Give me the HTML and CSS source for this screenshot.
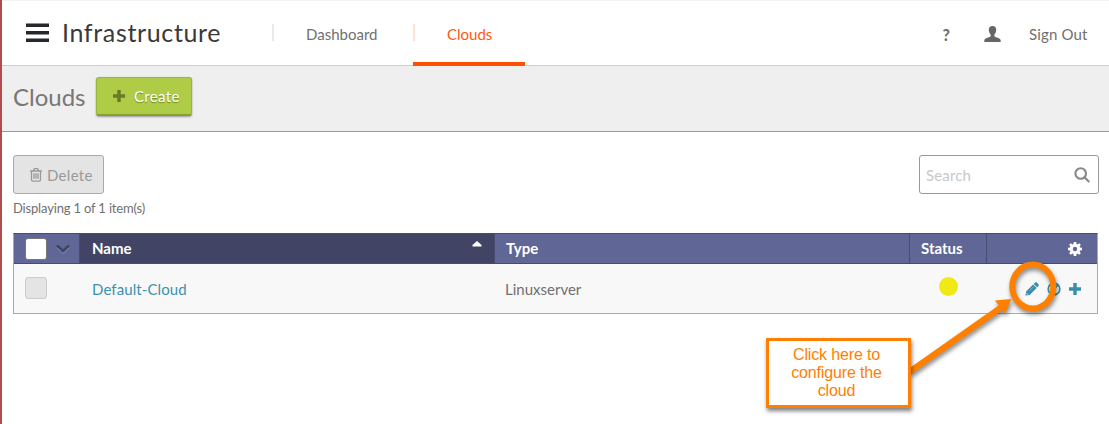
FILE: index.html
```html
<!DOCTYPE html>
<html lang="en">
<head>
<meta charset="utf-8">
<title>Infrastructure - Clouds</title>
<link rel="stylesheet" href="styles.css">
</head>
<body>
<div class="app">
  <header class="topbar">
    <svg class="menu" width="23" height="20" viewBox="0 0 23 20"><path d="M0 .5h23v3.500H0zM0 8h23v3.500H0zM0 15.500h23v3.500H0z" fill="#27282c"/></svg>
    <h1 class="brand">Infrastructure</h1>
    <nav class="nav">
      <a class="tab">Dashboard</a>
      <a class="tab active">Clouds</a>
    </nav>
    <div class="account">
      <span class="help">?</span>
      <svg class="user" width="17" height="16" viewBox="0 0 17 16"><path d="M8.500 0C5.800 0 4.600 1.700 4.800 4.300c.1 2 1 3.300 1.800 4.200v1.700C6 11.700.5 11.400.3 14.400V16h16.400v-1.600c-.2-3-5.700-2.700-6.300-4.200V8.500C11.200 7.600 12.100 6.300 12.200 4.300 12.400 1.700 11.200 0 8.500 0z" fill="#666"/></svg>
      <a class="signout">Sign Out</a>
    </div>
  </header>
  <div class="titlebar">
    <h2 class="title">Clouds</h2>
    <button class="create"><svg width="12" height="12" viewBox="0 0 12 12"><path d="M4.300 0h3.400v4.300H12v3.400H7.700V12H4.300V7.700H0V4.300h4.300z" fill="#67792a"/></svg><span>Create</span></button>
  </div>
  <main class="content">
    <div class="tools">
      <button class="delete"><svg width="12" height="14" viewBox="0 0 12 14" fill="none" stroke="#999" stroke-width="1.300"><path d="M0 3h12M3.800 3V1.800Q3.800.7 4.800.7h2.400q1 0 1 1.100V3M1.500 3v8.800q0 1.400 1.400 1.400h6.200q1.400 0 1.400-1.400V3M4 5.300v5.500M6 5.300v5.500M8 5.300v5.500"/></svg><span>Delete</span></button>
      <div class="search"><span>Search</span><svg width="16" height="16" viewBox="0 0 16 16" fill="none" stroke="#888" stroke-width="2.100"><circle cx="6.700" cy="6.500" r="5.300"/><path d="M10.500 10.300l4.200 4.200" stroke-linecap="round"/></svg></div>
    </div>
    <p class="count">Displaying 1 of 1 item(s)</p>
    <div class="table">
      <div class="row head">
        <div class="cell pick"><i class="box"></i><svg width="14" height="10" viewBox="0 0 14 10" fill="none"><path d="M1 3.300l6 5.500 6-5.500" stroke="#9a9dc0" stroke-width="1.500"/><path d="M1 1.500l6 5.500 6-5.500" stroke="#424465" stroke-width="2.800"/></svg></div>
        <div class="cell name"><span>Name</span><svg class="sort" width="10" height="6" viewBox="0 0 10 6"><path d="M5 0l4.500 4v1.500H.5V4z" fill="#fff"/></svg></div>
        <div class="cell type"><span>Type</span></div>
        <div class="cell status"><span>Status</span></div>
        <div class="cell actions"><svg width="14" height="14" viewBox="0 0 14 14"><path fill="#fff" fill-rule="evenodd" d="M5.800 0h2.400l.4 2 .9.400 1.700-1.200 1.600 1.600-1.200 1.700.4.900 2 .4v2.400l-2 .4-.4.900 1.200 1.700-1.600 1.600-1.700-1.200-.9.400-.4 2H5.800l-.4-2-.9-.4-1.700 1.200-1.600-1.600 1.200-1.700-.4-.9-2-.4V5.800l2-.4.4-.9-1.200-1.700 1.600-1.600 1.700 1.200.9-.4zM7 4.800a2.200 2.200 0 1 0 0 4.400 2.200 2.200 0 0 0 0-4.400z"/></svg></div>
      </div>
      <div class="row item">
        <div class="cell pick"><i class="box"></i></div>
        <div class="cell name"><a>Default-Cloud</a></div>
        <div class="cell type"><span>Linuxserver</span></div>
        <div class="cell status"><i class="dot"></i></div>
        <div class="cell actions">
          <svg width="14" height="14" viewBox="0 0 14 14"><path d="M.4 13.600l.9-4.300 6.800-6.800 3.500 3.500-6.900 6.900zM8.700 1.900L10.300.5q.8-.6 1.500.1L13.500 2.300q.6.6 0 1.400L12.200 5.400z" fill="#388eab"/><path d="M1.600 11.200l1.400 1.400" stroke="#f8f8f8" stroke-width=".9"/><path d="M4.500 8.700l4-4" stroke="#8fc0d0" stroke-width=".7"/></svg>
          <svg width="14" height="14" viewBox="0 0 14 14" fill="none" stroke="#388eab" stroke-width="1.700"><circle cx="7" cy="7" r="5.800"/><path d="M3.200 10.800l7.600-7.600"/></svg>
          <svg width="12" height="12" viewBox="0 0 12 12"><path d="M4.300 0h3.400v4.300H12v3.400H7.700V12H4.300V7.700H0V4.300h4.300z" fill="#388eab"/></svg>
        </div>
      </div>
    </div>
  </main>
  <svg class="pointer" width="320" height="160" viewBox="760 255 320 160">
    <g fill="none" stroke="#ff8000"><ellipse cx="1032.800" cy="286.500" rx="20.500" ry="22" stroke-width="6"/><path d="M910 371.500L1001 307.500" stroke-width="6"/></g>
    <path d="M1011.500 299L1005 313.500 995 300.500z" fill="#ff8000"/>
  </svg>
  <div class="note">Click here to<br>configure the<br>cloud</div>
</div>
</body>
</html>
```
FILE: styles.css
```css
* { box-sizing: border-box; }
body { margin: 0; background: #fff; font-family: Lato, "Open Sans", sans-serif; font-size: 15px; color: #707070; }
h1, h2, p { margin: 0; font-weight: 400; }
svg { display: block; flex: none; }
button { font: inherit; display: flex; align-items: center; border-radius: 3px; }
.app { position: relative; height: 424px; border-left: 2px solid #ad4d4e; overflow: hidden; white-space: nowrap; }
.topbar { height: 66px; display: flex; align-items: center; padding-left: 24px; border-top: 1px solid #f3f3f3; border-bottom: 1px solid #cecece; }
.brand { width: 210px; margin: -3px 0 0 13px; font-size: 25px; line-height: 30px; color: #3a3a3a; letter-spacing: .65px; }
.nav { display: flex; align-self: stretch; margin-bottom: -1px; }
.tab { position: relative; width: 141px; padding: 0 0 0 34px; line-height: 66px; }
.tab::before { content: ""; position: absolute; left: 0; top: 23px; width: 2px; height: 17px; background: #e9e9e9; }
.tab.active { width: 112px; color: #ff5a10; border-bottom: 4px solid #ff5000; }
.tab.active::before { background: #ffe0d5; }
.account { display: flex; align-items: center; margin: 2px 0 0 auto; padding-right: 21px; }
.help { font-weight: 900; font-size: 16px; margin-right: 34px; }
.user { margin-right: 28px; }
.signout { width: 59px; letter-spacing: .15px; }
.titlebar { height: 66px; display: flex; align-items: flex-start; padding: 11px 11px 0; background: #efefef; border-bottom: 1px solid #999; }
.title { width: 83px; font-size: 24px; line-height: 40px; color: #777; }
.create { width: 96px; height: 39px; padding: 0 0 0 16px; gap: 9px; background: #afcc46; border: 1px solid #9bb63d; border-bottom: 2px solid #86a02f; color: #fff; letter-spacing: .35px; box-shadow: 0 1px 2px #999; text-shadow: 0 1px 1px #718525; }
.content { padding: 23px 11px 0; }
.tools { display: flex; justify-content: space-between; width: 1086px; }
.delete { width: 91px; height: 39px; padding: 0 0 0 16px; gap: 5px; background: #e4e4e4; border: 1px solid #aaa; color: #999; letter-spacing: .3px; }
.search { width: 180px; height: 39px; display: flex; align-items: center; justify-content: space-between; padding: 0 8px 0 6px; border: 1px solid #999; border-radius: 3px; color: #c8c8c8; letter-spacing: .15px; }
.count { font-size: 13px; line-height: 18px; margin: 5px 0 16px; letter-spacing: -.17px; }
.table { width: 1085px; border: 1px solid #aaa; border-top-color: #484a70; }
.row { display: grid; grid-template-columns: 65px 415px 415px 77px 1fr; }
.cell { display: flex; align-items: center; }
.head { height: 30px; background: #606695; color: #fff; font-weight: 700; border-bottom: 1px solid #484a70; }
.head .cell + .cell { border-left: 1px solid #484c72; }
.head span { margin-top: -2px; }
.item { height: 49px; background: #f8f8f8; }
.pick { padding-left: 11px; gap: 9px; }
.box { width: 22px; height: 22px; border: 1px solid #777; border-radius: 3px; background: #fff; }
.item .box { background: #e4e4e4; border-color: #ccc; margin-top: -2px; }
.name { padding-left: 14px; }
.head .name { padding-left: 12px; background: #424465; justify-content: space-between; padding-right: 12px; }
.sort { margin-top: -9px; }
.name a { margin-left: -1px; color: #3b92b0; letter-spacing: .1px; }
.type { padding-left: 11px; }
.head .status { padding-left: 11px; }
.item .status { padding: 0 0 5px 30px; }
.dot { width: 19px; height: 19px; border-radius: 50%; background: #f0e914; }
.actions { justify-content: flex-end; padding-right: 15px; gap: 8px; }
.item .actions { padding-right: 16px; }
.pointer { position: absolute; left: 758px; top: 255px; filter: drop-shadow(1px 3px 2px rgba(0,0,0,.45)); }
.note { position: absolute; left: 764px; top: 338px; width: 145px; height: 70px; padding: 5px 4px 0 0; border: 3px solid #ff8000; background: #fff; box-shadow: 1px 3px 4px rgba(0,0,0,.5); color: #ff8000; text-align: center; font: 16px/18px "Liberation Sans", Arial, sans-serif; letter-spacing: -.15px; }
```
